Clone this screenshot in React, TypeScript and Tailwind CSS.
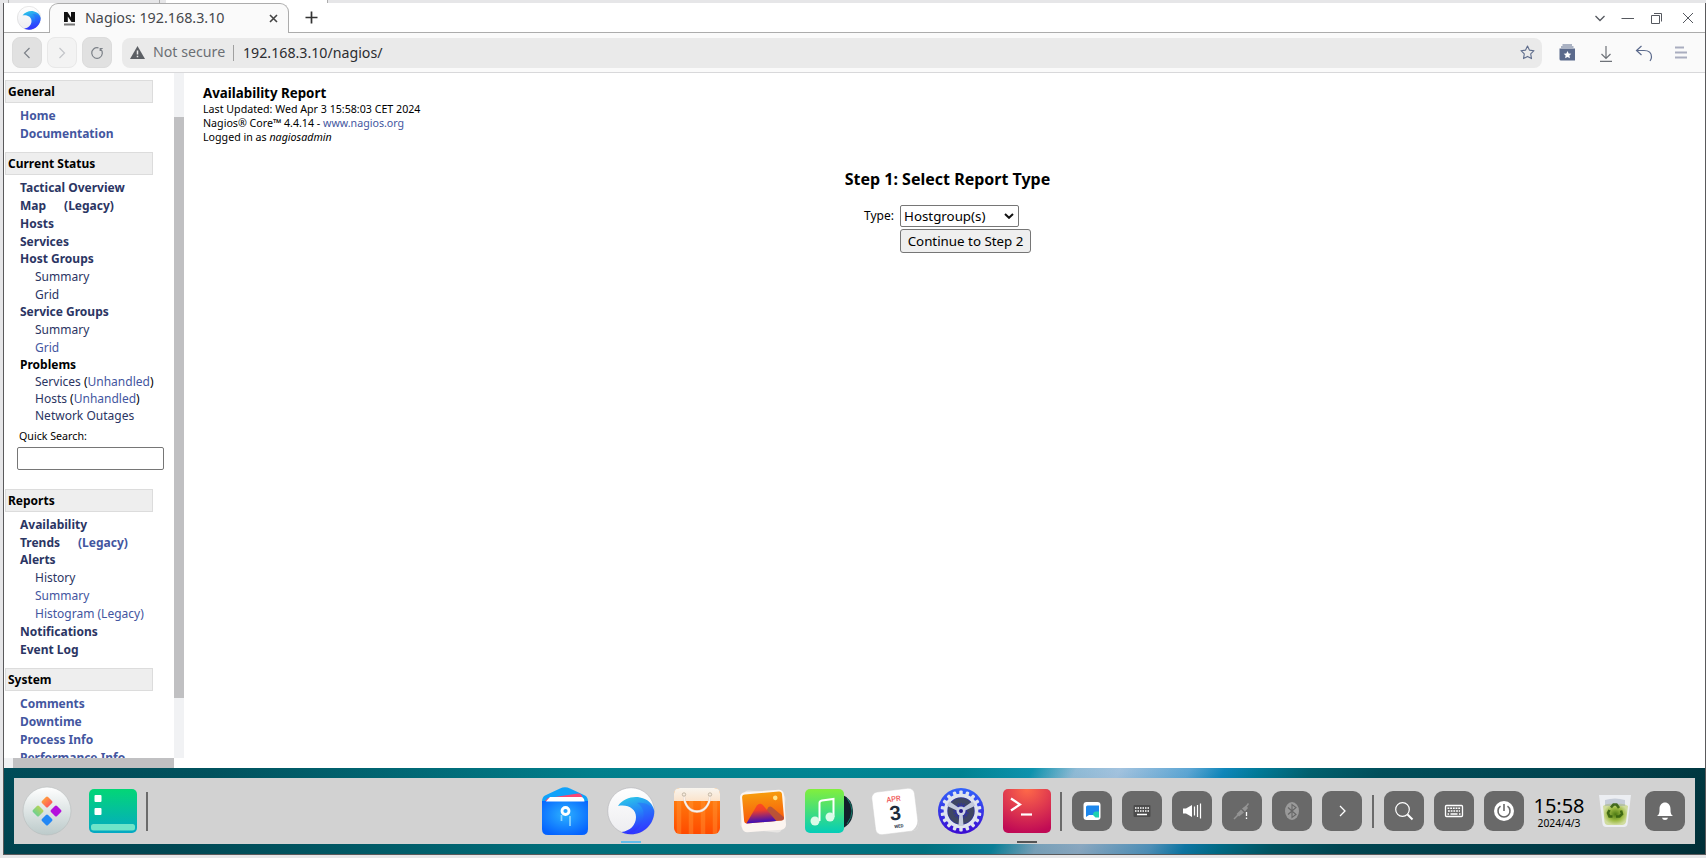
import React from "react";

type Tone = "visited" | "fresh" | "plain";

const tones: Record<Tone, string> = {
  visited: "text-[#2b3563]",
  fresh: "text-[#4356a0]",
  plain: "text-black",
};

function Row({ tone = "visited", bold = false, sub = false, tight = false, children }: {
  tone?: Tone; bold?: boolean; sub?: boolean; tight?: boolean; children: React.ReactNode;
}) {
  return (
    <li className={`flex items-start whitespace-pre leading-[18px] ${tight ? "h-[17px]" : "h-[18px]"} ${bold ? "font-bold" : ""} ${sub ? "pl-[30px]" : "pl-[15px]"} ${tones[tone]}`}>
      {children}
    </li>
  );
}

function Heading({ children }: { children: React.ReactNode }) {
  return (
    <h2 className="flex h-[23px] w-[148px] items-center border border-[#dcdcdc] bg-[#eeeeee] pl-[2px] text-[12px] font-bold text-black">
      {children}
    </h2>
  );
}

function Sidebar() {
  return (
    <div className="flex h-[695px] w-[180px] shrink-0 flex-col">
      <div className="flex h-[685px]">
        <nav className="h-[685px] w-[170px] overflow-hidden pl-px pt-[7px] text-[12px]">
          <Heading>General</Heading>
          <ul className="pt-1">
            <Row bold tone="fresh">Home</Row>
            <Row bold tone="fresh">Documentation</Row>
          </ul>
          <div className="h-[9px]" />
          <Heading>Current Status</Heading>
          <ul className="pt-1">
            <Row bold>Tactical Overview</Row>
            <Row bold><span>Map</span><span className="pl-[18px]">(Legacy)</span></Row>
            <Row bold>Hosts</Row>
            <Row bold tight>Services</Row>
            <Row bold>Host Groups</Row>
            <Row sub>Summary</Row>
            <Row sub tight>Grid</Row>
            <Row bold>Service Groups</Row>
            <Row sub>Summary</Row>
            <Row sub tight tone="fresh">Grid</Row>
            <Row bold tight tone="plain">Problems</Row>
            <Row sub tight>Services <span className="text-black">(</span><span className="text-[#4356a0]">Unhandled</span><span className="text-black">)</span></Row>
            <Row sub tight>Hosts <span className="text-black">(</span><span className="text-[#4356a0]">Unhandled</span><span className="text-black">)</span></Row>
            <Row sub>Network Outages</Row>
          </ul>
          <div className="flex h-[64px] flex-col pt-px">
            <label className="h-[21px] pl-[14px] text-[10.667px] leading-[20px]">Quick Search:</label>
            <input className="ml-[12px] h-[23px] w-[147px] rounded-[2px] border border-[#767676] bg-white" />
          </div>
          <Heading>Reports</Heading>
          <ul className="pt-1">
            <Row bold>Availability</Row>
            <Row bold tight><span>Trends</span><span className="pl-[18px] text-[#4356a0]">(Legacy)</span></Row>
            <Row bold>Alerts</Row>
            <Row sub>History</Row>
            <Row sub tone="fresh">Summary</Row>
            <Row sub tone="fresh">Histogram (Legacy)</Row>
            <Row bold>Notifications</Row>
            <Row bold>Event Log</Row>
          </ul>
          <div className="h-[9px]" />
          <Heading>System</Heading>
          <ul className="pt-1">
            <Row bold tone="fresh">Comments</Row>
            <Row bold tone="fresh">Downtime</Row>
            <Row bold tone="fresh">Process Info</Row>
            <Row bold tone="fresh">Performance Info</Row>
          </ul>
        </nav>
        <div className="h-[685px] w-[10px] bg-[#f1f2f4] pt-[44px]">
          <div className="h-[581px] bg-[#c0c0c2]" />
        </div>
      </div>
      <div className="flex h-[10px] w-[170px] bg-[#f1f2f4] pl-[9px]">
        <div className="h-full w-full bg-[#c0c0c2]" />
      </div>
    </div>
  );
}

function BrowserLogo({ className, id }: { className: string; id: string }) {
  return (
    <svg className={className} viewBox="0 0 48 48">
      <defs>
        <linearGradient id={`${id}a`} x1="0.2" y1="0" x2="0.5" y2="1">
          <stop offset="0" stopColor="#2cc8e8" />
          <stop offset="0.45" stopColor="#2585f8" />
          <stop offset="1" stopColor="#3324ff" />
        </linearGradient>
        <linearGradient id={`${id}b`} x1="0" y1="0" x2="0" y2="1">
          <stop offset="0" stopColor="#ffffff" />
          <stop offset="1" stopColor="#ececef" />
        </linearGradient>
      </defs>
      <circle cx="24" cy="24" r="23.3" fill={`url(#${id}b)`} stroke="#b9b9bd" strokeWidth="0.7" />
      <path d="M11 19C16 12 25 9 33 10.500C41 12 46 17 47.300 24C47.300 37 37 47.300 24 47.300C19 47.300 16 46 14.500 45C23 44 29 38 29 30C29 22 21 17 11 19Z" fill={`url(#${id}a)`} />
      <path d="M30 16C36 19 39 27 35 36C32 42 27 45 22 47C37 48 47 37 47 24C44 18 38 15 30 16Z" fill="#2a55ff" opacity="0.35" />
    </svg>
  );
}

const ctl = "flex h-[31px] w-[30px] items-center justify-center rounded-[8px] border";

function TabStrip() {
  return (
    <div className="flex h-[30px] items-end border-b border-[#acacac] bg-white">
      <div className="flex h-[30px] w-[45px] items-center pl-[13px]"><BrowserLogo id="tab" className="mt-px h-[24px] w-[24px]" /></div>
      <div className="-mb-px flex h-[30px] w-[240px] items-center rounded-t-[9px] border border-b-0 border-[#acacac] bg-[#fafafa] pl-[13px]">
        <svg className="h-[15px] w-[13px]" viewBox="0 0 13 15">
          <path d="M1 11V1H4.500L8 6.500V1H12V11H8.500L4.800 5.500V11Z" fill="#111" />
          <path d="M1 12.500H12V14.500H1Z" fill="#777" />
        </svg>
        <span className="whitespace-nowrap pl-[9px] text-[14.300px] leading-none text-[#45474b]">Nagios: 192.168.3.10</span>
        <svg className="ml-auto mr-[10px] h-[9px] w-[9px]" viewBox="0 0 9 9"><path d="M1 1L8 8M8 1L1 8" stroke="#444" strokeWidth="1.600" /></svg>
      </div>
      <svg className="mb-[8px] ml-[16px] h-[13px] w-[13px]" viewBox="0 0 13 13"><path d="M6.500 0.500V12.500M0.500 6.500H12.500" stroke="#333" strokeWidth="1.700" /></svg>
      <svg className="mb-[6px] ml-auto mr-[11px] h-[16px] w-[100px]" viewBox="0 0 100 16" fill="none" stroke="#55585f" strokeWidth="1">
        <path d="M1.500 6L6 10.500L10.500 6" strokeWidth="1.300" />
        <path d="M27.500 8.500H40" />
        <path d="M57.500 5.500H65.500V13.500H57.500ZM60 3.500H67.500V11.500" />
        <path d="M89 3L99 13M99 3L89 13" />
      </svg>
    </div>
  );
}

function Toolbar() {
  return (
    <div className="flex h-[40px] items-center border-b border-[#d8d8da] bg-[#fafafa] pl-[8px]">
      <div className="flex gap-[5px]">
        <button className={`${ctl} border-[#dcdcdc] bg-[#e1e1e1]`}><svg className="h-[12px] w-[8px]" viewBox="0 0 8 12"><path d="M6.500 1L1.500 6L6.500 11" fill="none" stroke="#7c8188" strokeWidth="1.200" /></svg></button>
        <button className={`${ctl} border-[#e8e8e8] bg-[#f3f3f3]`}><svg className="h-[12px] w-[8px]" viewBox="0 0 8 12"><path d="M1.500 1L6.500 6L1.500 11" fill="none" stroke="#c3c5c9" strokeWidth="1.200" /></svg></button>
        <button className={`${ctl} border-[#dcdcdc] bg-[#e1e1e1]`}><svg className="h-[14px] w-[14px]" viewBox="0 0 14 14"><path d="M10.400 2.900A5.300 5.300 0 1 1 8.500 1.900M10.200 5V2.500H12.700" fill="none" stroke="#7c8188" strokeWidth="1.200" /></svg></button>
      </div>
      <div className="ml-[10px] flex h-[30px] w-[1420px] items-center rounded-[8px] bg-[#eaeaea] pl-[8px]">
        <svg className="h-[13px] w-[15px]" viewBox="0 0 15 13"><path d="M7.500 0L15 13H0Z" fill="#5c5f64" /><path d="M7.500 4.500V8.500M7.500 9.700V11.200" stroke="#eaeaea" strokeWidth="1.500" /></svg>
        <span className="w-[88px] shrink-0 whitespace-nowrap pl-[8px] text-[14.200px] leading-none text-[#6c6f74]">Not secure</span>
        <span className="h-[16px] w-px bg-[#a0a0a0]" />
        <span className="whitespace-nowrap pl-[9px] pt-[2px] text-[14.200px] leading-none text-[#2c2d30]">192.168.3.10/nagios/</span>
        <svg className="ml-auto mr-[7px] h-[15px] w-[15px]" viewBox="0 0 15 15"><path d="M7.500 1L9.400 5.100L14 5.700L10.700 8.900L11.500 13.600L7.500 11.400L3.500 13.600L4.300 8.900L1 5.700L5.600 5.100Z" fill="none" stroke="#5f6d8c" strokeWidth="1.100" strokeLinejoin="round" /></svg>
      </div>
      <svg className="ml-[17px] h-[18px] w-[130px]" viewBox="0 0 130 18" fill="none" stroke="#5b6a8c" strokeWidth="1.200">
        <path d="M3.500 1H13M2 3H14.500" />
        <path d="M0.500 4.500H16V16.500H2Q0.500 16.500 0.500 15Z" fill="#5b6a8c" stroke="none" />
        <path d="M8.500 7L9.700 9.500L12.300 9.800L10.400 11.600L10.900 14.200L8.500 12.900L6.100 14.200L6.600 11.600L4.700 9.800L7.300 9.500Z" fill="white" stroke="none" />
        <path d="M47 2V14M42.500 10L47 14.500L51.500 10M41 17.400H53" stroke="#6e7278" />
        <path d="M82.500 2L77.500 6.500L82.500 11M77.500 6.500H85Q92.500 6.500 92.500 13Q92.500 15 91 17" />
        <path d="M116 3.500H125M116 8.500H128M116 13.500H128" stroke="#a9adbf" strokeWidth="2" />
      </svg>
    </div>
  );
}

function Report() {
  return (
    <main className="flex grow flex-col pl-[19px] pt-[11px] text-black">
      <h1 className="text-[13.333px] font-bold leading-[18px]">Availability Report</h1>
      <div className="text-[10.667px] leading-[14px]">
        <p>Last Updated: Wed Apr 3 15:58:03 CET 2024</p>
        <p>Nagios® Core™ 4.4.14 - <a className="text-[#4356a0]">www.nagios.org</a></p>
        <p>Logged in as <em>nagiosadmin</em></p>
      </div>
      <div className="flex w-[1489px] flex-col items-center pt-[22px]">
        <h2 className="h-[39px] text-[16px] font-bold leading-[26px]">Step 1: Select Report Type</h2>
        <div className="grid w-[167px] grid-cols-[36px_131px]">
          <span className="text-[12px] leading-[22px]">Type:</span>
          <div className="flex h-[22px] w-[119px] items-center justify-between rounded-[2px] border border-[#767676] pl-[3px] pr-[4px] pt-px text-[13.333px]">
            Hostgroup(s)
            <svg className="mb-px h-[6px] w-[10px]" viewBox="0 0 10 6"><path d="M1 1L5 4.800L9 1" fill="none" stroke="#111" strokeWidth="2" /></svg>
          </div>
          <span />
          <button className="mt-[2px] h-[24px] rounded-[3px] border border-[#767676] bg-[#efefef] pt-px text-[13.333px] leading-none">Continue to Step 2</button>
        </div>
      </div>
    </main>
  );
}

function Apps() {
  const blades = [0, 120, 240];
  const teeth = [0, 20, 40, 60, 80, 100, 120, 140, 160, 180, 200, 220, 240, 260, 280, 300, 320, 340];
  return (
    <div className="flex items-center gap-[18px]">
      <svg className="h-[50px] w-[48px]" viewBox="0 0 48 50">
        <defs><radialGradient id="fm" cx="0.5" cy="0.4" r="0.65"><stop offset="0" stopColor="#2cb1ff" /><stop offset="1" stopColor="#0563ff" /></radialGradient></defs>
        <path d="M1 16Q1 11 4 9.500L19 2.500Q24 0 29 2.500L44 9.500Q47 11 47 16Z" fill="#10a2fa" />
        <path d="M1 15H47V43Q47 49 41 49H7Q1 49 1 43Z" fill="url(#fm)" />
        <path d="M4 15L7 12L37 7.500Q39.500 7.300 40.500 9L42 13Z" fill="#fb4674" />
        <path d="M5 15.500L9 11H40Q43 11 43.500 15.500Z" fill="#fff" />
        <circle cx="24.500" cy="25" r="3.500" fill="none" stroke="#fff" strokeWidth="2.800" />
        <path d="M20.500 29V35M29 30V40" stroke="#8ed4ff" strokeWidth="1.700" />
      </svg>
      <div className="relative h-[48px] w-[48px]">
        <BrowserLogo id="dock" className="h-[48px] w-[48px]" />
        <span className="absolute left-[14px] top-[54px] h-[2px] w-[20px] bg-[#62bdea]" />
      </div>
      <svg className="h-[48px] w-[48px]" viewBox="0 0 48 48">
        <defs><linearGradient id="bag" x1="0" y1="0" x2="0" y2="1"><stop offset="0" stopColor="#ff8a10" /><stop offset="1" stopColor="#ff4a00" /></linearGradient>
          <linearGradient id="rim" x1="0" y1="0" x2="0" y2="1"><stop offset="0" stopColor="#f8f5ef" /><stop offset="1" stopColor="#fbe3cb" /></linearGradient></defs>
        <rect x="1" y="1" width="46" height="46" rx="6" fill="url(#bag)" />
        <path d="M6 14V47M18 14V47M30 14V47M42 14V47" stroke="#ff9a3c" strokeWidth="4.500" opacity="0.4" />
        <path d="M1 14V7Q1 1 7 1H41Q47 1 47 7V14Z" fill="url(#rim)" />
        <path d="M11 8C11 30 37 30 37 8" fill="none" stroke="#e9d6c8" strokeWidth="2.400" />
        <path d="M11 8C11 30 37 30 37 8" fill="none" stroke="#fbf3ec" strokeWidth="1.400" />
        <circle cx="11" cy="7.500" r="1.700" fill="none" stroke="#b5a997" strokeWidth="0.800" /><circle cx="37" cy="7.500" r="1.700" fill="none" stroke="#b5a997" strokeWidth="0.800" />
      </svg>
      <svg className="h-[48px] w-[48px]" viewBox="0 0 48 48">
        <defs><linearGradient id="pic" x1="0" y1="0" x2="0" y2="1"><stop offset="0" stopColor="#f79b0c" /><stop offset="1" stopColor="#f8580c" /></linearGradient><linearGradient id="mtn" x1="0" y1="0" x2="0" y2="1"><stop offset="0" stopColor="#ff4b20" /><stop offset="0.350" stopColor="#f04028" /><stop offset="1" stopColor="#3a0dba" /></linearGradient></defs>
        <rect x="3" y="5" width="42" height="39" rx="5" fill="#e7e5e3" transform="rotate(6 24 24)" />
        <rect x="2" y="4" width="44" height="40" rx="5" fill="#fcf5f0" transform="rotate(-4 24 24)" />
        <g transform="rotate(-5 24 20)">
          <rect x="4" y="6" width="40" height="29" rx="3" fill="url(#pic)" />
          <path d="M21 35L29 21Q31 19 33 21L44 32Q44 35 41 35Z" fill="#a0484a" opacity="0.700" />
          <path d="M6 35L18 18Q21 15 24 18L36 35Z" fill="url(#mtn)" />
          <circle cx="37" cy="12" r="2.300" fill="#ffe38a" />
        </g>
      </svg>
      <svg className="h-[48px] w-[48px]" viewBox="0 0 48 48">
        <defs><linearGradient id="mus" x1="0" y1="0" x2="0" y2="1"><stop offset="0" stopColor="#82ef3d" /><stop offset="1" stopColor="#04cdb8" /></linearGradient></defs>
        <path d="M36 7Q48 12 48 24Q48 37 36 42Z" fill="#12202b" /><path d="M42 11Q52 24 42 37" fill="none" stroke="#17806d" />
        <rect x="0" y="2" width="39" height="44" rx="5" fill="url(#mus)" />
        <path d="M14.500 34V16Q14.500 14 17 13.500L28.500 12V30" fill="none" stroke="#fff" strokeWidth="2" />
        <circle cx="10" cy="34" r="4.500" fill="#dafbe8" /><circle cx="25" cy="30" r="4.500" fill="#dafbe8" />
      </svg>
      <svg className="h-[48px] w-[48px]" viewBox="0 0 48 48">
        <g transform="rotate(-7 24 24)">
          <rect x="2.500" y="3" width="43" height="43" rx="6" fill="#fff" stroke="#cfcfcf" strokeWidth="0.500" />
          <path d="M45.500 36V40Q45.500 46 38 46Q44 43 45.500 36" fill="#d2d2d2" />
          <text x="24" y="14.500" textAnchor="middle" fontFamily="Roboto" fontWeight="500" fontSize="7.500" fill="#f05858">APR</text>
          <text x="24" y="33" textAnchor="middle" fontFamily="Roboto" fontWeight="700" fontSize="20" fill="#1f2d3d">3</text>
          <text x="26" y="41" textAnchor="middle" fontFamily="Roboto" fontWeight="700" fontSize="4.500" fill="#26384a">WED</text>
        </g>
      </svg>
      <svg className="h-[48px] w-[48px]" viewBox="0 0 48 48">
        <defs><linearGradient id="set" x1="0" y1="0" x2="0" y2="1"><stop offset="0" stopColor="#3263fb" /><stop offset="1" stopColor="#3b0bd2" /></linearGradient></defs>
        <circle cx="24" cy="24" r="23" fill="url(#set)" />
        {teeth.map((a) => <rect key={a} x="22.300" y="3.500" width="3.400" height="6" rx="1" fill="#dfe3ee" transform={`rotate(${a} 24 24)`} />)}
        <circle cx="24" cy="24" r="15.500" fill="#31339c" stroke="#dfe3ee" strokeWidth="3.600" />
        <circle cx="24" cy="24" r="10.500" fill="none" stroke="#3f4763" strokeWidth="5" />
        <circle cx="24" cy="24" r="7" fill="none" stroke="#3f4763" strokeWidth="2" strokeDasharray="1.600 1.200" />
        {blades.map((a) => <path key={a} d="M22.500 25L21.500 39H26.500L25.500 25Z" fill="#c3cadb" transform={`rotate(${a} 24 24)`} />)}
        <circle cx="24" cy="24" r="4.500" fill="#ccd3e2" /><circle cx="24" cy="24" r="2" fill="#271c8e" />
      </svg>
      <div className="relative h-[48px] w-[48px]">
        <svg className="h-[48px] w-[48px]" viewBox="0 0 48 48">
          <defs><radialGradient id="term" cx="0.5" cy="0" r="1"><stop offset="0" stopColor="#ff6a48" /><stop offset="1" stopColor="#c00a55" /></radialGradient></defs>
          <rect x="0" y="2" width="48" height="44" rx="5" fill="url(#term)" />
          <path d="M8 11.500L17 17.500L8 23.500" fill="none" stroke="#fff" strokeWidth="2.200" /><path d="M18 27.500H29" stroke="#fff" strokeWidth="2.200" />
        </svg>
        <span className="absolute left-[14px] top-[54px] h-[2px] w-[20px] bg-[#555555]" />
      </div>
    </div>
  );
}

function Tile({ children }: { children: React.ReactNode }) {
  return (
    <div className="flex h-[40px] w-[40px] items-center justify-center rounded-[9px] bg-[#696969]">
      <svg className="h-[24px] w-[24px]" viewBox="0 0 24 24" fill="none" stroke="#fff">{children}</svg>
    </div>
  );
}

function Bin() {
  return (
    <svg className="h-[34px] w-[34px]" viewBox="0 0 34 34">
      <defs><radialGradient id="bin"><stop offset="0" stopColor="#4d7a12" /><stop offset="0.600" stopColor="#9ebc45" /><stop offset="1" stopColor="#d0dc9e" /></radialGradient></defs>
      <path d="M1 1H33L29.500 30Q29 33 26 33H8Q5 33 4.500 30Z" fill="#eceef2" />
      <path d="M5 12Q10 8 17 11Q24 8 30 12L28 28Q27 31 24 31H10Q7 31 6.500 28Z" fill="url(#bin)" />
      <path d="M7 6Q17 3 27 6L27 12H7Z" fill="#8f9bb4" opacity="0.400" />
      <path d="M13 13.500L15.500 10.500H18.500L21 14M23 16.500L24 20L21.500 22.500H18M14.500 22.500H11.500L10 19L11.500 16" fill="none" stroke="#36600f" strokeWidth="2.600" opacity="0.900" />
    </svg>
  );
}

function Dock() {
  return (
    <div className="flex h-[66px] items-center bg-[#d2d2d2] pl-[8px] pr-[10px]">
      <svg className="h-[50px] w-[50px]" viewBox="0 0 50 50">
        <defs><linearGradient id="lau" x1="0" y1="0" x2="0" y2="1"><stop offset="0" stopColor="#fff" /><stop offset="1" stopColor="#bccaca" /></linearGradient>
          <linearGradient id="or"><stop offset="0" stopColor="#ff9b3d" /><stop offset="1" stopColor="#ff5a5a" /></linearGradient>
          <linearGradient id="gr" x1="0" y1="0" x2="0" y2="1"><stop offset="0" stopColor="#b5d45a" /><stop offset="1" stopColor="#6ed090" /></linearGradient></defs>
        <circle cx="25" cy="25" r="24" fill="url(#lau)" stroke="#b7bcbc" strokeWidth="0.600" />
        <rect x="20.700" y="11.700" width="8.600" height="8.600" rx="1.500" fill="url(#or)" transform="rotate(45 25 16)" />
        <rect x="11.700" y="20.700" width="8.600" height="8.600" rx="1.500" fill="url(#gr)" transform="rotate(45 16 25)" />
        <rect x="29.700" y="20.700" width="8.600" height="8.600" rx="1.500" fill="#b410dc" transform="rotate(45 34 25)" />
        <rect x="20.700" y="29.700" width="8.600" height="8.600" rx="1.500" fill="#2388f5" transform="rotate(45 25 34)" />
      </svg>
      <svg className="ml-[17px] h-[44px] w-[48px]" viewBox="0 0 48 44">
        <defs><linearGradient id="mt" x1="0" y1="0" x2="0" y2="1"><stop offset="0" stopColor="#03d676" /><stop offset="1" stopColor="#04a9c4" /></linearGradient></defs>
        <rect width="48" height="44" rx="5" fill="url(#mt)" />
        <rect x="5.500" y="6" width="7" height="7" rx="1" fill="#fff" /><rect x="5.500" y="19" width="7" height="7" rx="1" fill="#fff" />
        <rect x="2" y="35" width="44" height="6.500" rx="2.500" fill="#6ee4c9" />
      </svg>
      <span className="ml-[9px] h-[39px] w-[2px] bg-[#6b6b6b]" />
      <div className="ml-[393px]"><Apps /></div>
      <span className="ml-[9px] h-[39px] w-[2px] bg-[#6b6b6b]" />
      <div className="ml-[10px] flex gap-[10px]">
        <Tile>
          <rect x="3.500" y="3" width="17" height="18" rx="3" fill="#fff" stroke="none" />
          <path d="M7.500 6.500H19V16H9L6 18V8Q6 6.500 7.500 6.500Z" fill="#1d88ee" stroke="none" /><path d="M13 16Q13 12.500 16 12.500H19V18.500H15.500Z" fill="#20d1b0" stroke="none" />
        </Tile>
        <Tile>
          <rect x="3.500" y="6" width="17" height="12" rx="1" fill="#4c4c4c" stroke="none" />
          <path d="M5 9H19M5 12H19" strokeWidth="1.500" strokeDasharray="1.500 1" /><path d="M7 15.500H17" strokeWidth="1.500" />
        </Tile>
        <Tile>
          <path d="M3 9.500H6L12 6V18L6 14.500H3Z" fill="#fff" stroke="none" /><path d="M14.500 7.500V16.500M17.500 6V18M20.500 4.500V19.500" strokeWidth="1.200" />
        </Tile>
        <Tile>
          <path d="M4 20L8 16M15 9L18.500 4.500" stroke="#949494" strokeWidth="1.500" /><path d="M6.500 15L11 10.500L14 13.500L9 17.500ZM12 9.500L16 6.500L18 9L15 12.500Z" fill="#949494" stroke="none" />
          <path d="M16.500 13V17M16.500 18.500V20" strokeWidth="1.300" />
        </Tile>
        <Tile>
          <ellipse cx="12" cy="12" rx="7" ry="9" fill="#9a9a9a" stroke="none" />
          <path d="M8 8.500L16 15.500L12 18.500V5.500L16 8.500L8 15.500" stroke="#666" strokeWidth="1.100" />
        </Tile>
        <Tile><path d="M10 7L15 12L10 17" strokeWidth="1.300" /></Tile>
      </div>
      <span className="ml-[10px] h-[33px] w-[2px] bg-[#6b6b6b]" />
      <div className="ml-[10px] flex gap-[10px]">
        <Tile><circle cx="10.500" cy="10.500" r="6.800" strokeWidth="1.200" /><path d="M15.500 15.500L20.500 20.500" strokeWidth="2" /></Tile>
        <Tile>
          <rect x="3.500" y="6.500" width="17" height="11" rx="1" strokeWidth="1.300" />
          <path d="M5.500 9.300H18.500M6 12H18" strokeWidth="1.500" strokeDasharray="1.800 0.900" /><path d="M5.500 15H7M8.500 15H15.500M17 15H18.500" strokeWidth="1.300" />
        </Tile>
        <Tile>
          <circle cx="12" cy="12" r="10" fill="#fff" stroke="none" />
          <path d="M8.500 7.200A6 6 0 1 0 15.500 7.200M12 5V12" stroke="#696969" strokeWidth="1.600" />
        </Tile>
      </div>
      <div className="ml-[9px] flex w-[52px] flex-col items-center pt-[3px] text-black">
        <span className="text-[20px] leading-[20px]">15:58</span>
        <span className="text-[10.300px] leading-[14px]">2024/4/3</span>
      </div>
      <div className="ml-auto flex items-center gap-[13px]">
        <Bin />
        <Tile>
          <path d="M4 17C6.500 15.500 6.500 13 6.500 10C6.500 6 9 3.500 12 3.500C15 3.500 17.500 6 17.500 10C17.500 13 17.500 15.500 20 17Z" fill="#fff" stroke="none" /><path d="M9 18.800H15Q14.500 21 12 21Q9.500 21 9 18.800Z" fill="#fff" stroke="none" />
        </Tile>
      </div>
    </div>
  );
}

export default function App() {
  return (
    <div className="flex h-[858px] w-[1706px] flex-col overflow-hidden bg-[#e6e6e8] font-['Noto_Sans',sans-serif]">
      <div className="flex h-[3px] pl-[8px]">
        <span className="w-[152px] border-x border-[#acacac] bg-[#e6e6e8]" />
        <span className="ml-[6px] w-[162px] border-r border-[#acacac] bg-white" />
      </div>
      <div className="ml-[3px] flex h-[852px] w-[1703px] flex-col border-x border-b border-[#5a5a5c] bg-white">
        <TabStrip />
        <Toolbar />
        <div className="flex h-[695px]">
          <Sidebar />
          <Report />
        </div>
        <div className="h-[86px] bg-[linear-gradient(180deg,rgba(0,20,30,0)_0%,rgba(0,20,30,0.18)_100%),linear-gradient(117deg,#004b58_0%,#00525e_12%,#006c79_25%,#00808d_34%,#008694_48%,#008392_55%,#0d93ae_59%,#8fbbd6_61.5%,#a3c3df_64%,#5ca6d4_68%,#0f87bb_70%,#007a98_72%,#00606e_75%,#004f5b_79%,#004450_90%,#00343c_100%)] px-[10px] py-[10px]">
          <Dock />
        </div>
      </div>
    </div>
  );
}
